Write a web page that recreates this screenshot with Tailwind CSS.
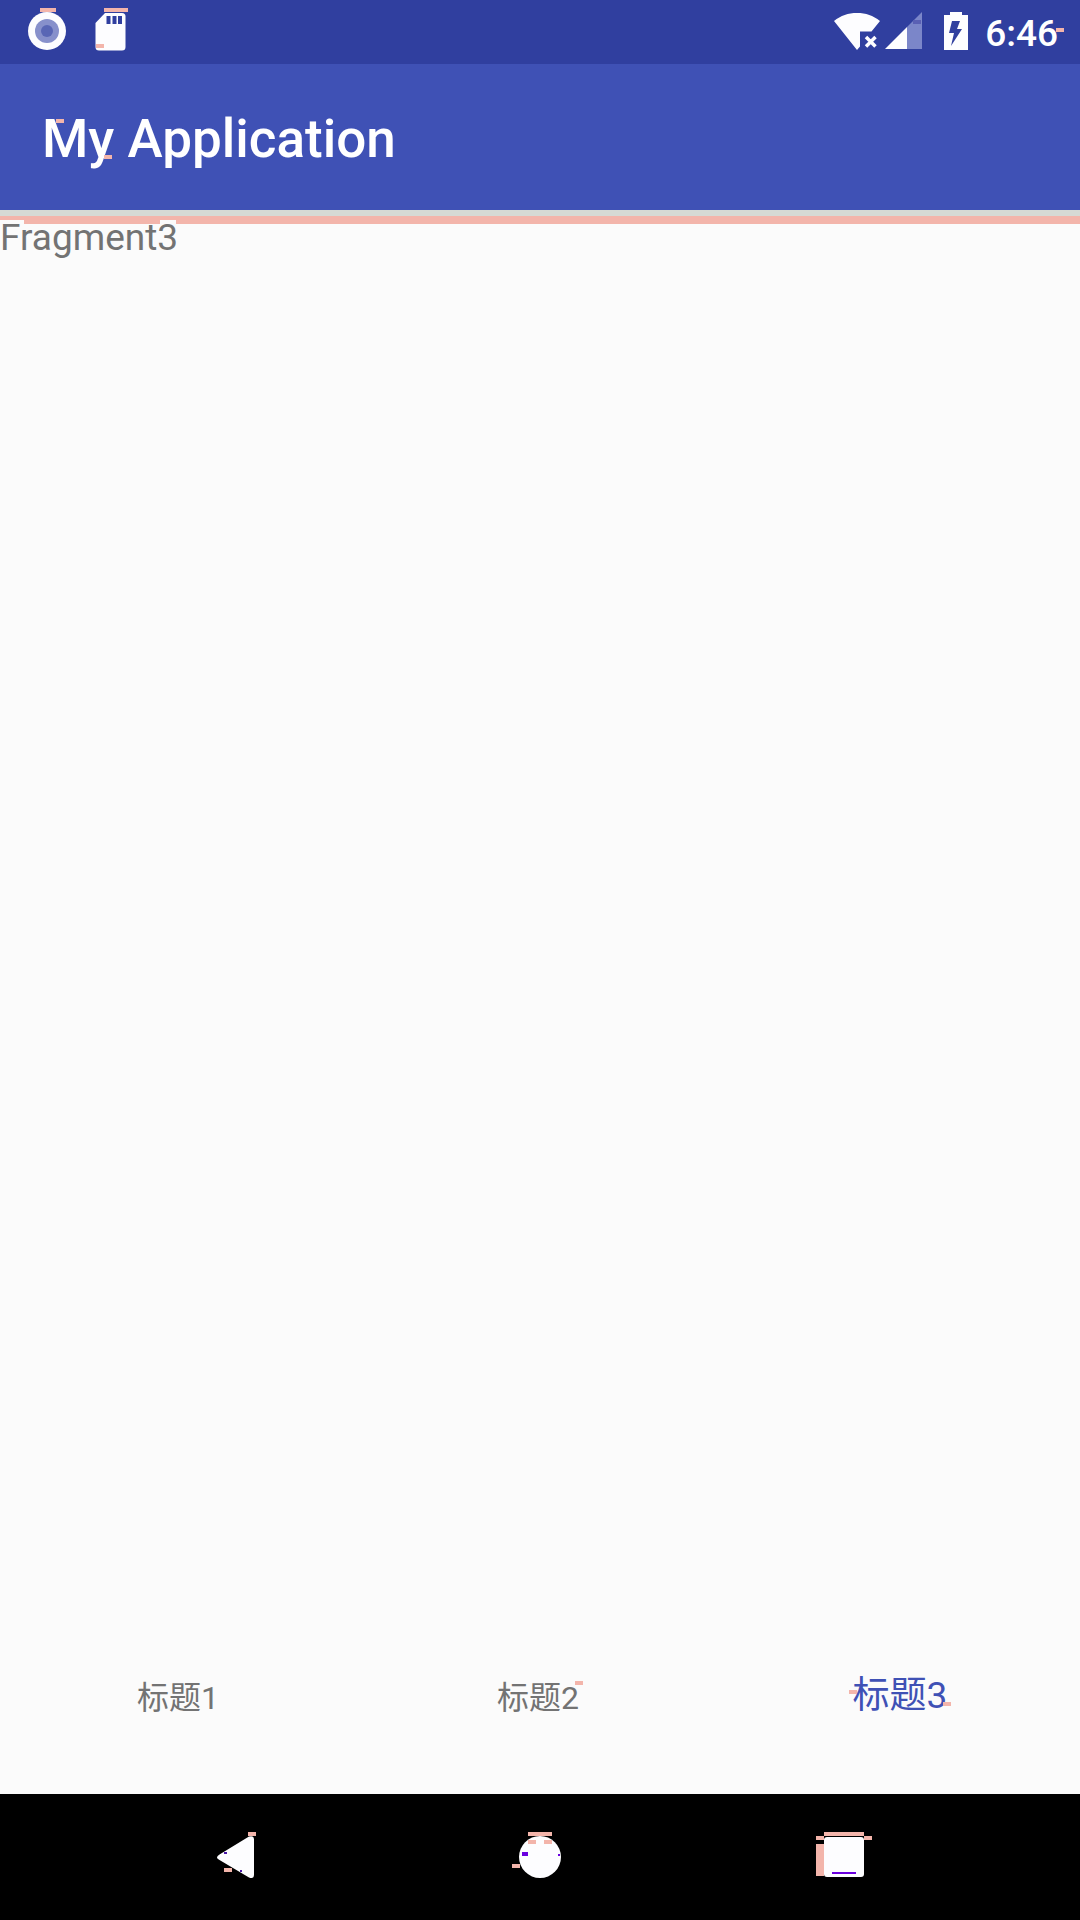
<!DOCTYPE html>
<html lang="zh">
    <head>
        <meta charset="UTF-8" />
        <meta name="viewport" content="width=device-width, initial-scale=1.0" />
        <title>My Application</title>
        <script src="https://cdn.jsdelivr.net/npm/@tailwindcss/browser@4"></script>
    </head>
    <body
        class="flex min-h-screen flex-col bg-[#fbfbfb] font-['Roboto','Noto_Sans_CJK_SC',sans-serif]"
    >
        <!-- Status bar -->
        <div class="flex h-16 items-center bg-[#303f9f] pl-6 pr-[22px] text-white">
            <svg class="h-16 w-12" viewBox="0 0 48 64" fill="none">
                <circle cx="23" cy="31" r="19" fill="#fdfdff" />
                <circle cx="23" cy="31" r="12" fill="#8790cb" />
                <circle cx="23" cy="31" r="6" fill="#5966b5" />
                <path d="M16 8h16v4H16z" fill="#f3b5ab" />
            </svg>
            <svg class="ml-4 h-16 w-12" viewBox="0 0 48 64" fill="none">
                <path
                    d="M17 13h17a3.500 3.500 0 0 1 3.500 3.500V47a3.500 3.500 0 0 1-3.500 3.500H11A3.500 3.500 0 0 1 7.500 47V23z"
                    fill="#fdfdff"
                />
                <path d="M18.500 16h4v8h-4zM24.500 16h4v8h-4zM30 16h4v8h-4z" fill="#303f9f" />
                <path d="M16 8h24v4H16zM8 44h8v4H8z" fill="#f3b5ab" />
            </svg>
            <svg class="ml-auto h-16 w-12" viewBox="0 0 48 64" fill="none">
                <path
                    d="M1 21C8 15.500 15 13 24 13s16 2.500 23 8l-8.500 10.500H27V46.500l-3 3.500z"
                    fill="#fdfdff"
                />
                <path d="M33 37l9.500 9.500M42.500 37L33 46.500" stroke="#fdfdff" stroke-width="3.500" />
            </svg>
            <svg class="ml-1 h-16 w-10" viewBox="0 0 40 64" fill="none">
                <path d="M22 27v22h15V12z" fill="#7b86c9" />
                <path d="M0 49h22V27z" fill="#fdfdff" />
                <path d="M28 20h8v4h-8z" fill="#5a60b4" />
            </svg>
            <svg class="ml-4 h-16 w-8" viewBox="0 0 32 64" fill="none">
                <path
                    d="M9 12h12v3h6v35H3V15h6z"
                    fill="#fdfdff"
                />
                <path d="M11 21h8l-3 8h5L10 46l3-13H8z" fill="#303f9f" />
            </svg>
            <div class="relative ml-3 pt-1 text-[37px] leading-[60px] font-medium">
                6:46
                <span class="absolute top-7 -right-1.5 h-1 w-2 bg-[#f3b5ab]"></span>
            </div>
        </div>

        <!-- App bar -->
        <header class="flex h-[146px] items-center bg-[#3f51b5] px-[42px] pt-1">
            <h1 class="relative text-[53px] leading-[60px] font-medium text-white">
                My Application
                <span class="absolute top-2.5 left-3.5 h-1 w-2 bg-[#f3b5ab]"></span>
                <span class="absolute top-[46px] left-[62px] h-1 w-2 bg-[#f3b5ab]"></span>
            </h1>
        </header>

        <main class="relative flex-1">
            <div class="h-1.5 bg-[#d6dad5]"></div>
            <div class="absolute inset-x-0 top-1.5 h-2 bg-[#f3b5ab]"></div>
            <div class="absolute top-2.5 left-0 h-1 w-6 bg-[#fbfbfb]"></div>
            <div class="absolute top-2.5 left-40 h-1 w-4 bg-[#fbfbfb]"></div>
            <p class="relative text-[37px] leading-[43px] text-[#737373]">Fragment3</p>
        </main>

        <!-- Bottom tabs -->
        <nav class="grid h-[147px] grid-cols-3 items-center pb-[54px] text-[#737373]">
            <button class="pt-2 pr-1 text-[32px] leading-[56px]">标题1</button>
            <button class="pt-2 pr-1 text-[32px] leading-[56px]">
                <span class="relative">
                    标题2
                    <span class="absolute top-0.5 -right-1 h-1 w-2 bg-[#f3b5ab]"></span>
                </span>
            </button>
            <button class="pt-1 text-[37px] leading-[56px] text-[#3f51b5]">
                <span class="relative">
                    标题3
                    <span class="absolute top-4 -left-1 h-1 w-2 bg-[#f3b5ab]"></span>
                    <span class="absolute top-7 -right-1 h-1 w-2 bg-[#f3b5ab]"></span>
                </span>
            </button>
        </nav>

        <!-- System navigation -->
        <div class="grid h-[126px] grid-cols-3 items-center justify-items-center bg-black px-[84px]">
            <button aria-label="Back">
                <svg class="h-[126px] w-16" viewBox="0 0 64 126" fill="none">
                    <path
                        d="M15.500 60.500L45 42.500q5-1.500 5 3v35q0 5-5 3L15.500 66q-5-2.500 0-5.500z"
                        fill="#fdfdff"
                    />
                    <path d="M44 38h8v4h-8zM20 74h8v4h-8z" fill="#f3b5ab" />
                    <path d="M20 58h3v2h-3zM36 76h2v2h-2z" fill="#4b18a8" />
                </svg>
            </button>
            <button aria-label="Home">
                <svg class="h-[126px] w-16" viewBox="0 0 64 126" fill="none">
                    <circle cx="32" cy="63" r="21" fill="#fdfdff" />
                    <path d="M20 38h24v4H20zM20 46h8v4h-8zM36 46h8v4h-8zM4 70h8v4H4z" fill="#f3b5ab" />
                    <path d="M14 58h6v4h-6zM50 60h2v2h-2z" fill="#6a00e0" />
                </svg>
            </button>
            <button aria-label="Overview">
                <svg class="h-[126px] w-16" viewBox="0 0 64 126" fill="none">
                    <rect x="12" y="43" width="40" height="40" rx="3" fill="#fdfdff" />
                    <path d="M12 38h40v4H12zM4 42h8v4H4zM52 42h8v4h-8zM4 50h8v32H4z" fill="#f3b5ab" />
                    <path d="M20 78h24v2H20z" fill="#6a00e0" />
                </svg>
            </button>
        </div>
    </body>
</html>
